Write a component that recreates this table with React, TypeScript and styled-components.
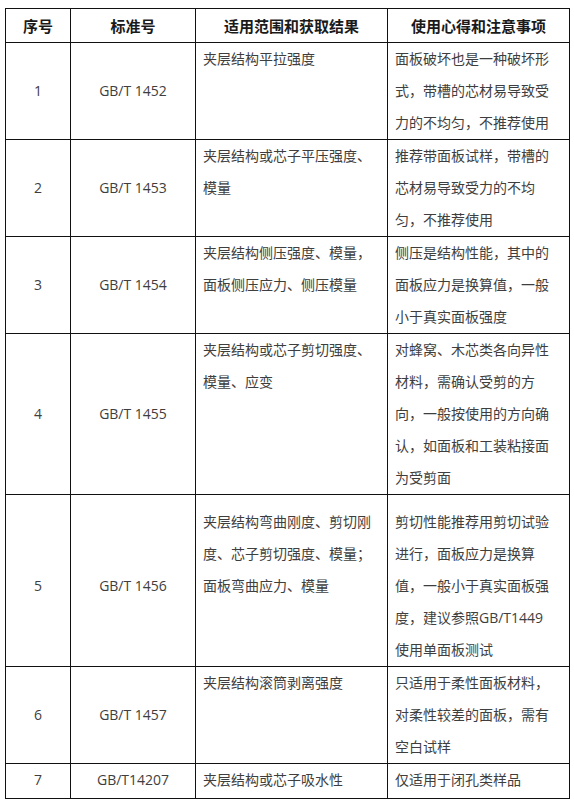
import { createGlobalStyle, styled } from 'styled-components';

type Row = {
  no: string;
  code: string;
  scope: string[];
  notes: string[];
  padTop?: number;
  padBottom?: number;
};

const rows: Row[] = [
  {
    no: '1',
    code: 'GB/T 1452',
    scope: ['夹层结构平拉强度'],
    notes: ['面板破坏也是一种破坏形', '式，带槽的芯材易导致受', '力的不均匀，不推荐使用'],
  },
  {
    no: '2',
    code: 'GB/T 1453',
    scope: ['夹层结构或芯子平压强度、', '模量'],
    notes: ['推荐带面板试样，带槽的', '芯材易导致受力的不均', '匀，不推荐使用'],
  },
  {
    no: '3',
    code: 'GB/T 1454',
    scope: ['夹层结构侧压强度、模量，', '面板侧压应力、侧压模量'],
    notes: ['侧压是结构性能，其中的', '面板应力是换算值，一般', '小于真实面板强度'],
  },
  {
    no: '4',
    code: 'GB/T 1455',
    scope: ['夹层结构或芯子剪切强度、', '模量、应变'],
    notes: [
      '对蜂窝、木芯类各向异性',
      '材料，需确认受剪的方',
      '向，一般按使用的方向确',
      '认，如面板和工装粘接面',
      '为受剪面',
    ],
  },
  {
    no: '5',
    code: 'GB/T 1456',
    scope: ['夹层结构弯曲刚度、剪切刚', '度、芯子剪切强度、模量；', '面板弯曲应力、模量'],
    notes: [
      '剪切性能推荐用剪切试验',
      '进行，面板应力是换算',
      '值，一般小于真实面板强',
      '度，建议参照GB/T1449',
      '使用单面板测试',
    ],
    padTop: 11,
  },
  {
    no: '6',
    code: 'GB/T 1457',
    scope: ['夹层结构滚筒剥离强度'],
    notes: ['只适用于柔性面板材料，', '对柔性较差的面板，需有', '空白试样'],
  },
  {
    no: '7',
    code: 'GB/T14207',
    scope: ['夹层结构或芯子吸水性'],
    notes: ['仅适用于闭孔类样品'],
    padBottom: 2,
  },
];

const Lines = ({ lines }: { lines: string[] }) => (
  <>
    {lines.map((l, i) => (
      <span key={i}>
        {l}
        {i < lines.length - 1 && <br />}
      </span>
    ))}
  </>
);

const App = () => {
  return (
    <>
      <GlobalStyle />
      <Page>
        <Table>
          <colgroup>
            <col style={{ width: 65 }} />
            <col style={{ width: 125 }} />
            <col style={{ width: 192 }} />
            <col style={{ width: 182 }} />
          </colgroup>
          <thead>
            <tr>
              <HeadCell>序号</HeadCell>
              <HeadCell>标准号</HeadCell>
              <HeadCell>适用范围和获取结果</HeadCell>
              <HeadCell>使用心得和注意事项</HeadCell>
            </tr>
          </thead>
          <tbody>
            {rows.map((r) => (
              <tr key={r.no}>
                <CenterCell $padTop={r.padTop} $padBottom={r.padBottom}>
                  {r.no}
                </CenterCell>
                <CenterCell $padTop={r.padTop} $padBottom={r.padBottom}>
                  {r.code}
                </CenterCell>
                <TextCell $padTop={r.padTop} $padBottom={r.padBottom}>
                  <Lines lines={r.scope} />
                </TextCell>
                <TextCell $padTop={r.padTop} $padBottom={r.padBottom}>
                  <Lines lines={r.notes} />
                </TextCell>
              </tr>
            ))}
          </tbody>
        </Table>
      </Page>
    </>
  );
};

export default App;

const GlobalStyle = createGlobalStyle`
  html, body {
    margin: 0;
    padding: 0;
    background: #fff;
  }
`;

const Page = styled.div`
  padding: 8px 5px 0;
  font-family: "Open Sans", "Noto Sans CJK SC", sans-serif;
  color: #3e3e3e;
`;

const Table = styled.table`
  width: 564px;
  border-collapse: collapse;
  table-layout: fixed;
`;

const HeadCell = styled.th`
  border: 1px solid #111;
  height: 33px;
  padding: 0;
  font-family: "Noto Sans CJK SC", sans-serif;
  font-size: 15px;
  font-weight: 700;
  line-height: 33px;
  color: #1a1a1a;
  text-align: center;
  vertical-align: middle;
`;

const CenterCell = styled.td<{ $padTop?: number; $padBottom?: number }>`
  border: 1px solid #111;
  padding: ${(p) => p.$padTop ?? 0}px 4px ${(p) => p.$padBottom ?? 0}px;
  font-size: 14px;
  line-height: 32px;
  text-align: center;
  vertical-align: middle;
`;

const TextCell = styled.td<{ $padTop?: number; $padBottom?: number }>`
  border: 1px solid #111;
  padding: ${(p) => p.$padTop ?? 0}px 6px ${(p) => p.$padBottom ?? 0}px 7px;
  font-size: 14px;
  line-height: 32px;
  text-align: left;
  vertical-align: top;
  white-space: nowrap;
  font-family: "Open Sans", "Noto Sans CJK SC", sans-serif;
`;
